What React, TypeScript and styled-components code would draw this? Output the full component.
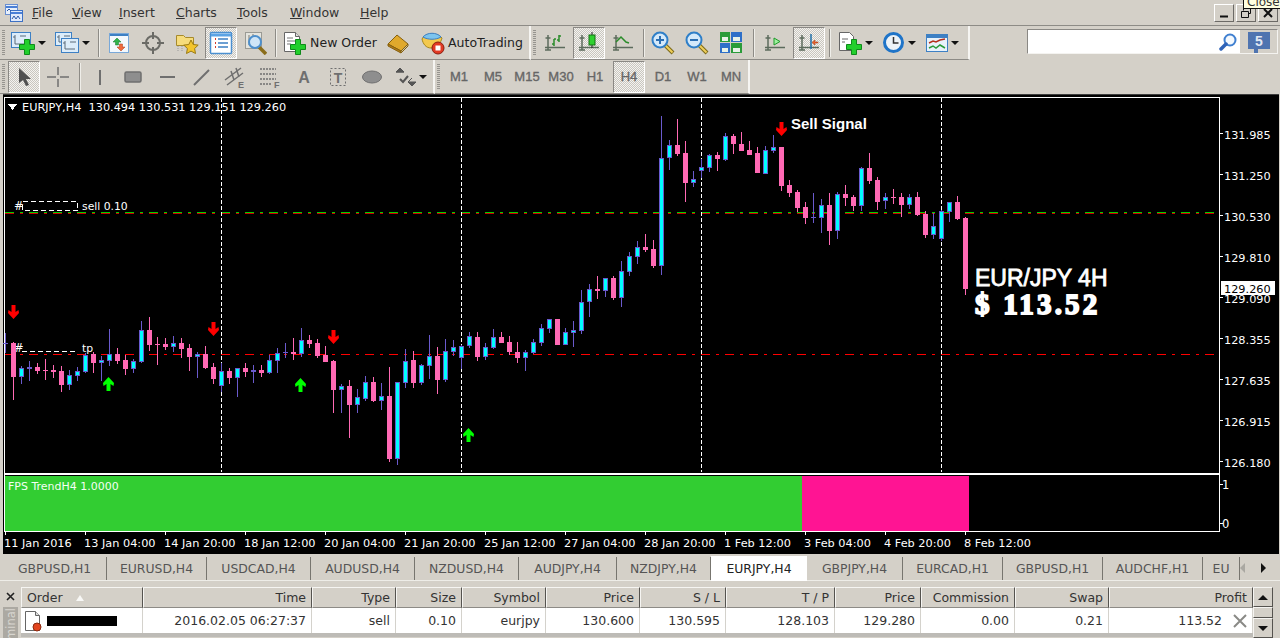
import React from 'react'
import styled, { createGlobalStyle } from 'styled-components'

const FONT = '"DejaVu Sans", "Liberation Sans", sans-serif'
const FACE = '#d4d0c8'

const GlobalStyle = createGlobalStyle`
  html, body { margin: 0; padding: 0; height: 100%; overflow: hidden; background: ${FACE}; }
  #root { height: 100%; }
`

// top, body top, body bottom, low (pixels on the chart). index -> x = 5 + 8 * i
type Candle = [1 | 0, number, number, number, number]
const candles: Candle[] = [
  [1,333,343,344,353],[0,342,343,377,400],[1,366,368,377,384],[1,361,367,369,381],[0,363,367,371,374],[0,359,370,371,380],
  [0,365,370,372,378],[0,366,371,385,392],[1,370,375,385,390],[1,367,371,376,381],[1,353,355,372,373],[0,352,354,363,373],
  [1,356,360,363,381],[1,329,354,361,366],[0,348,354,361,364],[0,355,360,369,375],[1,359,361,369,373],[1,321,330,362,363],
  [0,317,330,345,351],[0,337,344,345,365],[0,338,344,347,350],[1,336,343,347,352],[0,338,343,349,358],[0,344,348,357,371],
  [1,352,354,357,378],[0,346,354,368,369],[0,363,367,379,384],[1,363,371,386,392],[0,368,371,378,384],[1,368,368,378,397],
  [0,363,368,372,377],[1,365,370,372,383],[0,365,370,373,377],[1,355,360,373,374],[1,348,353,361,373],[1,343,352,353,358],
  [0,338,352,354,360],[1,328,340,354,357],[0,335,340,344,348],[0,339,343,356,358],[0,346,355,362,362],[0,360,361,390,413],
  [1,384,386,390,413],[0,380,386,405,438],[1,389,397,405,413],[1,376,382,399,401],[0,377,382,401,402],[1,383,396,401,410],
  [0,367,396,459,462],[1,382,382,459,465],[1,349,361,383,388],[0,351,360,383,388],[1,364,365,383,385],[1,335,356,366,379],
  [0,347,356,380,394],[1,339,351,380,382],[1,340,347,352,356],[1,345,346,358,369],[1,332,336,346,348],[0,332,337,357,361],
  [1,343,347,357,360],[1,329,337,348,349],[0,332,337,343,343],[0,336,342,352,355],[0,342,352,358,363],[1,350,352,358,371],
  [1,339,342,353,354],[1,324,328,343,346],[1,319,319,329,333],[0,319,319,345,345],[1,328,332,345,345],[1,321,330,333,347],
  [1,290,302,331,334],[1,284,289,302,317],[0,276,289,291,299],[1,278,278,291,297],[0,276,278,298,300],[1,261,271,298,307],
  [1,252,256,272,276],[1,241,247,257,264],[0,234,247,250,252],[0,240,249,266,268],[1,116,158,266,275],[1,140,145,158,170],
  [0,119,145,154,156],[0,141,153,183,202],[1,171,179,183,187],[1,159,167,171,178],[1,154,155,168,172],[0,152,155,159,171],
  [1,133,136,160,161],[0,134,136,144,154],[0,132,144,151,151],[0,141,150,155,155],[0,147,153,173,173],[1,146,150,174,174],
  [1,135,147,151,153],[0,147,147,186,191],[0,180,185,193,197],[0,190,192,208,212],[0,202,207,218,224],[1,193,217,218,223],
  [1,199,205,218,233],[0,193,205,231,245],[1,192,194,231,239],[0,185,194,198,206],[0,195,197,206,211],[1,167,168,206,211],
  [0,153,168,181,184],[0,177,180,202,210],[1,193,197,201,209],[0,189,197,198,204],[0,193,197,205,217],[1,194,197,205,209],
  [0,192,197,215,216],[0,211,214,235,238],[1,213,226,235,239],[1,210,211,239,241],[1,202,202,212,222],[0,196,202,219,220],
  [0,217,218,289,295],
]

const priceLabels: [string, number][] = [
  ['131.985', 134], ['131.250', 175], ['130.530', 216], ['129.810', 257], ['129.090', 298],
  ['128.355', 339], ['127.635', 380], ['126.915', 421], ['126.180', 462],
]
const timeLabels = [
  '11 Jan 2016', '13 Jan 04:00', '14 Jan 20:00', '18 Jan 12:00', '20 Jan 04:00', '21 Jan 20:00', '25 Jan 12:00',
  '27 Jan 04:00', '28 Jan 20:00', '1 Feb 12:00', '3 Feb 04:00', '4 Feb 20:00', '8 Feb 12:00',
]
const tabs: [string, number, boolean?][] = [
  ['GBPUSD,H1', 104], ['EURUSD,H4', 100], ['USDCAD,H4', 104], ['AUDUSD,H4', 104], ['NZDUSD,H4', 104], ['AUDJPY,H4', 98],
  ['NZDJPY,H4', 94], ['EURJPY,H4', 96, true], ['GBPJPY,H4', 96], ['EURCAD,H1', 100], ['GBPUSD,H1', 100], ['AUDCHF,H1', 100],
]
const COLS = '122px 169px 84px 66px 84px 94px 86px 109px 86px 94px 94px 144px'
const heads = ['Time', 'Type', 'Size', 'Symbol', 'Price', 'S / L', 'T / P', 'Price', 'Commission', 'Swap', 'Profit']
const cells = ['2016.02.05 06:27:37', 'sell', '0.10', 'eurjpy', '130.600', '130.595', '128.103', '129.280', '0.00', '0.21']

const Page = styled.div`
  width: 1280px;
  height: 638px;
  display: flex;
  flex-direction: column;
  position: relative;
  overflow: hidden;
  background: ${FACE};
  font-family: ${FONT};
  font-size: 12px;
  color: #222;
`
const MenuBar = styled.div`
  height: 25px;
  flex: none;
  display: flex;
  align-items: center;
  padding-left: 4px;
  border-bottom: 1px solid #8d8b86;
  position: relative;
`
const MenuItem = styled.span<{ $w: number }>`
  width: ${p => p.$w}px;
  font-size: 12.5px;
  color: #333;
  flex: none;
`
const WinButtons = styled.div`
  margin-left: auto;
  margin-right: 2px;
  display: flex;
  gap: 2px;
`
const WinButton = styled.div`
  width: 20px;
  height: 18px;
  box-sizing: border-box;
  border: 1px solid;
  border-color: #fff #6c6a66 #6c6a66 #fff;
  display: flex;
  align-items: center;
  justify-content: center;
`
const Tip = styled.div`
  position: absolute;
  top: -5px;
  right: -3px;
  width: 40px;
  height: 14px;
  box-sizing: border-box;
  background: #ffffe1;
  border: 1px solid #111;
  font-size: 12px;
  line-height: 13px;
  padding-left: 3px;
  color: #333;
`
const ToolRow = styled.div`
  height: 34px;
  flex: none;
  display: flex;
  align-items: stretch;
`
const Group = styled.div<{ $w: number; $edge?: boolean }>`
  width: ${p => p.$w}px;
  box-sizing: border-box;
  flex: none;
  display: flex;
  align-items: center;
  border-bottom: 1px solid #8d8b86;
  border-right: ${p => (p.$edge ? '2px solid #f6f5f2' : '0')};
`
const Grip = styled.span<{ $ml: number; $mr: number }>`
  width: 3px;
  height: 26px;
  flex: none;
  margin: 0 ${p => p.$mr}px 0 ${p => p.$ml}px;
  background: repeating-linear-gradient(#96948f 0 1px, transparent 1px 2px);
`
const Sep = styled.span<{ $w: number }>`
  width: ${p => p.$w}px;
  flex: none;
  display: flex;
  justify-content: center;
  &::before {
    content: '';
    width: 1px;
    height: 28px;
    background: #8d8b86;
    box-shadow: 1px 0 #efeee9;
  }
`
const ToolBtn = styled.div<{ $w?: number; $on?: boolean; $gap?: number }>`
  width: ${p => p.$w ?? 34}px;
  height: 32px;
  box-sizing: border-box;
  flex: none;
  display: flex;
  align-items: center;
  justify-content: center;
  gap: ${p => p.$gap ?? 0}px;
  font-size: 12.5px;
  color: #222;
  ${p =>
    p.$on
      ? `border: 1px solid; border-color: #8a8884 #fff #fff #8a8884; margin: 0 1px; width: 32px;
         background: repeating-conic-gradient(#c9c6bf 0 25%, #f4f3f0 0 50%) 0 0 / 2px 2px;`
      : ''}
`
const Caret = styled.span`
  width: 0;
  height: 0;
  flex: none;
  border-left: 4px solid transparent;
  border-right: 4px solid transparent;
  border-top: 4px solid #111;
`
const Frame = styled.span`
  font-family: "Liberation Sans", sans-serif;
  font-size: 13px;
  color: #666;
  -webkit-text-stroke: 0.35px #666;
`
const Search = styled.div`
  margin: 3px 2px 0 auto;
  width: 251px;
  height: 25px;
  box-sizing: border-box;
  flex: none;
  display: flex;
  border: 1px solid;
  border-color: #8a8884 #f4f3f0 #f4f3f0 #8a8884;
`
const SearchField = styled.div`
  flex: 1;
  background: #fff;
  display: flex;
  align-items: center;
  justify-content: flex-end;
  padding-right: 3px;
`
const SearchBadge = styled.div`
  width: 37px;
  flex: none;
  display: flex;
  align-items: center;
  justify-content: center;
`
const ChartWindow = styled.div`
  height: 460px;
  flex: none;
  margin-left: 3px;
  margin-right: 1px;
  background: #000;
  border-top: 1px solid #3c3c3c;
  box-sizing: border-box;
`
const ChartSvg = styled.svg`
  display: block;
  font-family: ${FONT};
`
const Label = styled.text<{ $c?: string; $s?: number }>`
  fill: ${p => p.$c ?? '#fff'};
  font-size: ${p => p.$s ?? 11.5}px;
  white-space: pre;
`
const SignalLabel = styled.text`
  fill: #fff;
  font-family: "Liberation Sans", sans-serif;
  font-size: 15px;
  font-weight: bold;
`
const PairLabel = styled.text`
  fill: #fff;
  font-family: "Liberation Sans", sans-serif;
  font-size: 23px;
  stroke: #fff;
  stroke-width: 0.8px;
`
const ProfitLabel = styled.text`
  fill: #fff;
  font-family: "Liberation Serif", serif;
  font-size: 29px;
  font-weight: bold;
  stroke: #fff;
  stroke-width: 1.8px;
  letter-spacing: 3.2px;
`
const TabBar = styled.div`
  height: 27px;
  flex: none;
  display: flex;
  align-items: center;
  box-sizing: border-box;
  padding: 2px 0 0 3px;
  border-bottom: 1px solid #eeede8;
`
const Tab = styled.div<{ $w: number; $on?: boolean }>`
  width: ${p => p.$w}px;
  height: 23px;
  box-sizing: border-box;
  flex: none;
  display: flex;
  align-items: center;
  justify-content: center;
  color: #555;
  font-size: 12.4px;
  border-right: ${p => (p.$on ? '0' : '1px solid #77756f')};
  ${p => (p.$on ? 'background: #fff; color: #222; height: 25px;' : '')}
`
const TabArrow = styled.span<{ $off?: boolean; $ml: number }>`
  width: 0;
  height: 0;
  flex: none;
  margin-left: ${p => p.$ml}px;
  border-top: 5px solid transparent;
  border-bottom: 5px solid transparent;
  ${p => (p.$off ? 'border-right: 5px solid #aaa8a2;' : 'border-left: 5px solid #111;')}
`
const Terminal = styled.div`
  flex: 1;
  display: flex;
  padding-top: 6px;
  min-height: 0;
`
const SideStrip = styled.div`
  width: 21px;
  flex: none;
  display: flex;
  flex-direction: column;
  align-items: flex-start;
  padding-left: 3px;
  box-sizing: border-box;
`
const CloseMark = styled.div`
  height: 18px;
  width: 15px;
  flex: none;
  display: flex;
  align-items: center;
  justify-content: center;
`
const VerticalTab = styled.div`
  width: 15px;
  flex: 1;
  margin-top: 2px;
  background: #aca9a2;
  overflow: hidden;
  color: #d8d6d0;
  font-size: 11.5px;
  display: flex;
  justify-content: center;
  align-items: flex-start;
`
const VerticalText = styled.span`
  writing-mode: vertical-rl;
  transform: rotate(180deg);
  flex: none;
  padding-bottom: 1px;
`
const Table = styled.div`
  width: 1232px;
  flex: none;
`
const HeadRow = styled.div`
  display: grid;
  grid-template-columns: ${COLS};
  height: 21px;
`
const HeadCell = styled.div<{ $left?: boolean }>`
  box-sizing: border-box;
  border: 1px solid;
  border-color: #f6f5f2 #55534f #8d8b86 #f6f5f2;
  display: flex;
  align-items: center;
  justify-content: ${p => (p.$left ? 'flex-start' : 'flex-end')};
  padding: 0 5px;
  font-size: 12.5px;
  color: #333;
  gap: 13px;
  white-space: nowrap;
`
const SortMark = styled.span`
  width: 0;
  height: 0;
  border-left: 4px solid transparent;
  border-right: 4px solid transparent;
  border-bottom: 6px solid #f8f8f6;
`
const BodyRow = styled.div`
  display: grid;
  grid-template-columns: ${COLS};
  height: 25px;
  background: #fff;
  border-bottom: 4px solid #bdbbb6;
`
const BodyCell = styled.div<{ $pad?: number }>`
  box-sizing: border-box;
  border-right: 1px solid #d4d2cc;
  display: flex;
  align-items: center;
  justify-content: flex-end;
  padding-right: ${p => p.$pad ?? 5}px;
  font-size: 12.5px;
  color: #333;
  gap: 10px;
`
const OrderCell = styled(BodyCell)`
  justify-content: flex-start;
  padding: 0 0 0 3px;
  gap: 4px;
`
const Redacted = styled.span`
  width: 70px;
  height: 10px;
  background: #000;
  flex: none;
`
const ScrollBar = styled.div`
  width: 20px;
  flex: none;
  display: flex;
  flex-direction: column;
`
const ScrollBtn = styled.div<{ $h: number }>`
  height: ${p => p.$h}px;
  flex: none;
  box-sizing: border-box;
  border: 1px solid;
  border-color: #f6f5f2 #55534f #55534f #f6f5f2;
  display: flex;
  align-items: center;
  justify-content: center;
`
const ScrollArrow = styled.span<{ $up?: boolean }>`
  width: 0;
  height: 0;
  border-left: 5px solid transparent;
  border-right: 5px solid transparent;
  ${p => (p.$up ? 'border-bottom: 5px solid #111;' : 'border-top: 5px solid #111;')}
`
const IconSvg = styled.svg`
  display: block;
  flex: none;
`

const Ico: React.FC<{ w?: number; h?: number; children: React.ReactNode }> = ({ w = 24, h = 24, children }) => (
  <IconSvg width={w} height={h} viewBox={`0 0 ${w} ${h}`}>
    {children}
  </IconSvg>
)

const G = '#6f6f6f'
const Plus = ({ dx = 0, dy = 0 }: { dx?: number; dy?: number }) => (
  <path transform={`translate(${dx} ${dy})`} d="M5.5 .5h5v5h5v5h-5v5h-5v-5h-5v-5h5z" fill="#22cf2c" stroke="#0f8a1b" />
)
const MiniWin = ({ x, y, w = 19, h = 15 }: { x: number; y: number; w?: number; h?: number }) => (
  <g>
    <rect x={x + 0.5} y={y + 0.5} width={w} height={h} fill="#dcecf9" stroke="#3d80c4" />
    <path d={`M${x + 4} ${y + 3}v${h - 6}h${w - 7}M${x + 4} ${y + 5}h-2M${x + 9} ${y + 4}h6`} stroke="#5b6b78" fill="none" />
  </g>
)
const Axes = ({ c = '#5c6b5c' }: { c?: string }) => (
  <path d="M5 4v15M2 16.500h20M2.500 7h5M8 19h-6" stroke={c} strokeWidth="1.500" fill="none" />
)
const Loupe = ({ sign }: { sign: 'plus' | 'minus' }) => (
  <>
    <path d="M14 14l8 8" stroke="#7c6a1a" strokeWidth="4" />
    <path d="M14.500 14.500l7 7" stroke="#f0cf5a" strokeWidth="2" />
    <circle cx="9" cy="9" r="7.500" fill="#d4e9fa" stroke="#2f7fc8" strokeWidth="2" />
    <path d={sign === 'plus' ? 'M5 9h8M9 5v8' : 'M5 9h8'} stroke="#2c6fb3" strokeWidth="2" />
  </>
)

const IconApp = () => (
  <Ico w={20} h={20}>
    <rect x="1.500" y="1.500" width="12" height="10" fill="#e8f0fb" stroke="#6a8fd0" />
    <rect x="6.500" y="7.500" width="12" height="11" fill="#dfe9fa" stroke="#3d71c4" />
    <path d="M2 4h11M7 10h11" stroke="#4a7fd6" strokeWidth="2" />
    <path d="M8 16l2-3 2 3 2-3 2 3M3 8l2-2 2 2" stroke="#2b58a8" fill="none" />
  </Ico>
)
const IconNewChart = () => (
  <Ico>
    <MiniWin x={0} y={1} />
    <Plus dx={8} dy={8} />
  </Ico>
)
const IconProfiles = () => (
  <Ico>
    <MiniWin x={0} y={1} w={16} h={13} />
    <MiniWin x={6} y={7} w={17} h={14} />
  </Ico>
)
const IconMarket = () => (
  <Ico>
    <rect x="2.500" y="2.500" width="19" height="19" fill="#f3f8fd" stroke="#79a8d8" />
    <path d="M3 4h18" stroke="#3d80c4" strokeWidth="2" />
    <path d="M10 7l-4 4h2.500v3h3v-3H14z" fill="#2fb34a" stroke="#16752a" strokeWidth=".5" />
    <path d="M14 20l4-4h-2.500v-3h-3v3H10z" fill="#ef6a3d" stroke="#a83a16" strokeWidth=".5" />
  </Ico>
)
const IconNavigator = () => (
  <Ico>
    <circle cx="12" cy="12" r="7" fill="none" stroke="#6b6b66" strokeWidth="2" />
    <path d="M12 1v7M12 16v7M1 12h7M16 12h7" stroke="#6b6b66" strokeWidth="2" />
  </Ico>
)
const IconFavorites = () => (
  <Ico>
    <path d="M1.500 4.500h7l2 2h8v8h-17z" fill="#f6dc7c" stroke="#a68a2c" />
    <path d="M3 15v6M7 15v6" stroke="#999" strokeDasharray="1 1" />
    <path d="M16 9l2.200 4.500 5 .6-3.600 3.400.9 5-4.500-2.400-4.500 2.400.9-5-3.600-3.400 5-.6z" fill="#f3c52e" stroke="#9a7a14" />
  </Ico>
)
const IconTerminal = () => (
  <Ico>
    <rect x="1.500" y="1.500" width="21" height="21" rx="1" fill="#fff" stroke="#4a8fd0" strokeWidth="1.500" />
    <path d="M2 4h20" stroke="#5ba3e4" strokeWidth="3" />
    <path d="M6 8h1M6 12h1M6 16h1" stroke="#d43a2a" strokeWidth="2" />
    <path d="M9 8h10M9 12h10M9 16h10" stroke="#3d80c4" strokeWidth="1.500" />
  </Ico>
)
const IconTester = () => (
  <Ico>
    <rect x="2.500" y="1.500" width="16" height="16" fill="#e4e4de" stroke="#9a9a94" />
    <path d="M6 4v10M10 3v8" stroke="#7a7a74" />
    <path d="M16 16l7 7" stroke="#8a6d1a" strokeWidth="3.500" />
    <circle cx="12" cy="11" r="6" fill="#cfe5f7" stroke="#4d8fcc" strokeWidth="2" />
  </Ico>
)
const IconOrder = () => (
  <Ico>
    <path d="M2.500 1.500h11l4 4v15h-15z" fill="#fff" stroke="#666" />
    <path d="M13.500 1.500v4h4" fill="#ddd" stroke="#666" />
    <path d="M5 7h6M5 10h8M5 13h4" stroke="#777" />
    <Plus dx={8} dy={8} />
  </Ico>
)
const IconBook = () => (
  <Ico>
    <path d="M2 13l9-9 11 9-7 7z" fill="#e0a92c" stroke="#86600f" />
    <path d="M2 13l13 7v2L2 15z" fill="#b57f18" stroke="#86600f" />
    <path d="M15 20l7-7v2l-7 7z" fill="#c9c4a6" stroke="#86600f" />
  </Ico>
)
const IconAuto = () => (
  <Ico>
    <path d="M1 8c2-6 16-7 20-1-1 5-6 10-11 10S2 13 1 8z" fill="#f3c94e" stroke="#a5861c" />
    <path d="M2 6c4-5 14-5 18 0-5 3-13 3-18 0z" fill="#7cc4ee" stroke="#3d80c4" />
    <circle cx="17" cy="17" r="6" fill="#e23a24" stroke="#8a1e10" />
    <rect x="14.500" y="14.500" width="5" height="5" fill="#fff" />
  </Ico>
)
const IconBars = () => (
  <Ico>
    <Axes />
    <path d="M11 15V8M11 13H9M11 8h2M16 11V4M16 9h-2M16 5h2" stroke="#2a8c2a" strokeWidth="1.500" fill="none" />
  </Ico>
)
const IconCandles = () => (
  <Ico>
    <Axes />
    <path d="M15 1v16" stroke="#222" />
    <rect x="12" y="4" width="6" height="10" fill="#2fd12f" stroke="#126e12" />
  </Ico>
)
const IconLine = () => (
  <Ico>
    <Axes />
    <path d="M5 11l5-5 5 5 3 1" stroke="#2a8c2a" strokeWidth="1.500" fill="none" />
  </Ico>
)
const IconZoomIn = () => <Ico><Loupe sign="plus" /></Ico>
const IconZoomOut = () => <Ico><Loupe sign="minus" /></Ico>
const IconTile = () => (
  <Ico>
    <rect x="1" y="1" width="10" height="10" fill="#2a9c3a" />
    <rect x="12" y="1" width="11" height="10" fill="#2e6fc8" />
    <rect x="1" y="12" width="10" height="10" fill="#2e6fc8" />
    <rect x="12" y="12" width="11" height="10" fill="#2a9c3a" />
    <path d="M3 6h6v4H3zM14 6h7v4h-7zM3 17h6v4H3zM14 17h7v4h-7z" fill="#e8f2e8" />
  </Ico>
)
const IconAutoScroll = () => (
  <Ico>
    <Axes />
    <path d="M11 7v7l6-3.500z" fill="#9ef09e" stroke="#1f9a2a" />
  </Ico>
)
const IconShift = () => (
  <Ico>
    <Axes />
    <path d="M14 3v15" stroke="#1f6fa8" strokeWidth="1.500" />
    <path d="M21 11h-3v-2l-3 2.500 3 2.500v-2h3z" fill="#e8602c" stroke="#a83a16" strokeWidth=".5" />
  </Ico>
)
const IconIndicators = () => (
  <Ico>
    <path d="M1.500 1.500h10l4 4v14h-14z" fill="#fff" stroke="#666" />
    <path d="M4 8h6M4 11h3" stroke="#666" />
    <Plus dx={8} dy={8} />
  </Ico>
)
const IconClock = () => (
  <Ico w={21} h={21}>
    <circle cx="10.500" cy="10.500" r="9" fill="#eef3f7" stroke="#1f74c8" strokeWidth="3" />
    <path d="M10.500 5v6h5" stroke="#333" strokeWidth="1.500" fill="none" />
  </Ico>
)
const IconTemplates = () => (
  <Ico w={22} h={22}>
    <rect x=".5" y="2.500" width="21" height="17" fill="#e8f2fb" stroke="#3d80c4" />
    <path d="M1 4.500h20" stroke="#3d80c4" strokeWidth="3" />
    <path d="M3 11l4-2 3 1 4-2 5-1" stroke="#b4301c" strokeWidth="1.500" fill="none" />
    <path d="M3 16l4-2 3 2 4-3 5 3" stroke="#2a9c3a" strokeWidth="1.500" fill="none" />
  </Ico>
)
const IconSearch = () => (
  <Ico w={18} h={18}>
    <circle cx="11" cy="7" r="5.500" fill="#f4f9fe" stroke="#3f7fd0" strokeWidth="2" />
    <path d="M7 11l-5 5" stroke="#2f63b8" strokeWidth="3.500" strokeLinecap="round" />
  </Ico>
)
const IconBubble = () => (
  <Ico w={22} h={24}>
    <rect y="2" width="22" height="17" fill="#4f74b0" />
    <path d="M6 19h4v4H6z" fill="#4f74b0" />
    <text x="11" y="16" textAnchor="middle" fontFamily="Liberation Sans, sans-serif" fontWeight="bold" fontSize="14" fill="#e2e8f2">5</text>
  </Ico>
)
const IconPointer = () => (
  <Ico>
    <path d="M7 3v15l4-3 3 6 3-1-3-6h5z" fill="#505050" />
  </Ico>
)
const IconCross = () => (
  <Ico>
    <path d="M12 2v8M12 14v8M1 12h9M14 12h9" stroke={G} strokeWidth="1.500" />
  </Ico>
)
const IconVLine = () => <Ico><path d="M12 5v15" stroke={G} strokeWidth="2" /></Ico>
const IconRect = () => <Ico><rect x="3" y="7" width="16" height="10" rx="1.500" fill="#8e8e8e" stroke={G} strokeWidth="1.500" /></Ico>
const IconHLine = () => <Ico><path d="M4 12h15" stroke={G} strokeWidth="2" /></Ico>
const IconTrend = () => <Ico><path d="M4 20L19 5" stroke={G} strokeWidth="2" /></Ico>
const IconChannel = () => (
  <Ico>
    <path d="M1 15L17 3M3 20L19 8M7 6l3 9M12 3l3 9" stroke={G} strokeWidth="1.500" />
    <text x="14" y="23" fontFamily="Liberation Sans, sans-serif" fontWeight="bold" fontSize="9" fill={G}>E</text>
  </Ico>
)
const IconFib = () => (
  <Ico>
    <path d="M2 4h16M2 9h16M2 14h16M2 19h12" stroke={G} strokeWidth="1.500" strokeDasharray="2 1" />
    <text x="16" y="23" fontFamily="Liberation Sans, sans-serif" fontWeight="bold" fontSize="9" fill={G}>F</text>
  </Ico>
)
const IconText = () => (
  <Ico>
    <text x="12" y="18" textAnchor="middle" fontFamily="Liberation Sans, sans-serif" fontWeight="bold" fontSize="16" fill={G}>A</text>
  </Ico>
)
const IconTextLabel = () => (
  <Ico>
    <rect x="4.500" y="3.500" width="15" height="17" fill="none" stroke={G} strokeDasharray="2 2" />
    <text x="12" y="18" textAnchor="middle" fontFamily="Liberation Sans, sans-serif" fontWeight="bold" fontSize="14" fill={G}>T</text>
  </Ico>
)
const IconEllipse = () => <Ico><ellipse cx="12" cy="12" rx="9.500" ry="6" fill="#8e8e8e" stroke={G} /></Ico>
const IconArrows = () => (
  <Ico>
    <path d="M2 7l4-4 4 4zM14 17l4 4 4-4zM2 7h8M14 17l4-4" fill="#555" stroke="#555" />
    <path d="M6 14l3 3 5-6" stroke="#555" strokeWidth="2" fill="none" />
  </Ico>
)
const IconDocAlert = () => (
  <Ico w={19} h={22}>
    <path d="M1.500 1.500h10l4 4v15h-14z" fill="#fff" stroke="#666" />
    <path d="M11.500 1.500v4h4" fill="#ddd" stroke="#666" />
    <circle cx="13" cy="17" r="4" fill="#e2451f" stroke="#8a2a10" />
  </Ico>
)

const SignalArrow: React.FC<{ x: number; y: number; up?: boolean }> = ({ x, y, up }) => (
  <polygon
    transform={`translate(${x} ${y}) scale(1 ${up ? -1 : 1})`}
    fill={up ? '#00ff00' : '#ff0000'}
    points="-2,-7 2,-7 2,0 5,-2 5.500,1 0,7 -5.500,1 -5,-2 -2,0"
  />
)

const DASH = '9 6 3 6'

const Chart = () => (
  <ChartSvg width={1276} height={459} viewBox="3 95 1276 459" shapeRendering="crispEdges">
    <rect x="4" y="97" width="1215" height="376" fill="none" stroke="#fff" />
    <rect x="4" y="474.500" width="1215" height="57" fill="none" stroke="#fff" />

    <polygon points="8,104 17,104 12.500,110" fill="#fff" />
    <Label x="22" y="111" $s={11.3}>EURJPY,H4  130.494 130.531 129.151 129.260</Label>

    <path d="M5 212.500h1213" stroke="#00d000" strokeDasharray={DASH} />
    <path d="M5 213.500h1213" stroke="#d00000" strokeDasharray={DASH} />
    <path d="M5 354.500h1213" stroke="#ff0000" strokeWidth="1.200" strokeDasharray={DASH} />

    {[221.5, 461.5, 701.5, 941.5].map(x => (
      <path key={x} d={`M${x} 98v374`} stroke="#fff" strokeDasharray="4 2" />
    ))}

    <Label x="14" y="210">#</Label>
    <rect x="22.500" y="201.500" width="55" height="9" fill="none" stroke="#fff" strokeDasharray="5 3" />
    <Label x="82" y="210" $s={10.8}>sell 0.10</Label>
    <Label x="14" y="352">#</Label>
    <path d="M22 351.500h53" stroke="#fff" strokeDasharray="5 3" />
    <Label x="82" y="352" $s={10.8}>tp</Label>

    {candles.map(([bull, high, top, bottom, low], i) => {
      const x = 5 + 8 * i
      return (
        <g key={i}>
          <rect x={x} y={high} width="1" height={low - high} fill={bull ? '#6a5acd' : '#ff69b4'} />
          <rect x={x - 2} y={top} width="5" height={Math.max(bottom - top, 1)} fill={bull ? '#6a5acd' : '#ff69b4'} />
          {bull === 1 && bottom - top > 2 && (
            <rect x={x - 1} y={top + 1} width="3" height={bottom - top - 2} fill="#00ffff" />
          )}
        </g>
      )
    })}

    <g shapeRendering="auto">
      <SignalArrow x={13.500} y={312} />
      <SignalArrow x={213.500} y={329} />
      <SignalArrow x={333.500} y={337} />
      <SignalArrow x={781.500} y={129} />
      <SignalArrow x={108.500} y={384} up />
      <SignalArrow x={300.500} y={385} up />
      <SignalArrow x={468.500} y={435} up />
    </g>

    <SignalLabel x="791" y="129">Sell Signal</SignalLabel>
    <PairLabel x="975" y="286">EUR/JPY 4H</PairLabel>
    <ProfitLabel x="975" y="314">$ 113.52</ProfitLabel>

    {priceLabels.map(([t, y]) => (
      <g key={t}>
        <path d={`M1219 ${y - 0.500}h4`} stroke="#fff" />
        <Label x="1224" y={y + 4.500} $s={11.300}>{t}</Label>
      </g>
    ))}
    <rect x="1221" y="281" width="54" height="14" fill="#fff" />
    <Label x="1224" y="293" $c="#000" $s={11.300}>129.260</Label>

    <rect x="5" y="476" width="797" height="55" fill="#32cd32" />
    <rect x="802" y="476" width="167" height="55" fill="#ff1493" />
    <Label x="8" y="490" $c="#f4fff4" $s={11}>FPS TrendH4 1.0000</Label>
    <path d="M1219 484.500h4M1219 523.500h4" stroke="#fff" />
    <Label x="1222" y="489">1</Label>
    <Label x="1222" y="528">0</Label>

    {timeLabels.map((t, i) => (
      <g key={t}>
        <path d={`M${5.5 + 80 * i} 531v4`} stroke="#fff" />
        <Label x={4 + 80 * i} y="547" $s={11.300}>{t}</Label>
      </g>
    ))}
  </ChartSvg>
)

export default function App() {
  return (
    <Page>
      <GlobalStyle />
      <MenuBar>
        <MenuItem $w={28}><IconApp /></MenuItem>
        <MenuItem $w={40}><u>F</u>ile</MenuItem>
        <MenuItem $w={47}><u>V</u>iew</MenuItem>
        <MenuItem $w={57}><u>I</u>nsert</MenuItem>
        <MenuItem $w={61}><u>C</u>harts</MenuItem>
        <MenuItem $w={53}><u>T</u>ools</MenuItem>
        <MenuItem $w={70}><u>W</u>indow</MenuItem>
        <MenuItem $w={40}><u>H</u>elp</MenuItem>
        <WinButtons>
          <WinButton>
            <Ico w={10} h={10}><path d="M1 8.500h8" stroke="#111" strokeWidth="2" /></Ico>
          </WinButton>
          <WinButton>
            <Ico w={12} h={12}><path d="M3.500 3.500v-2h7v5h-2M1.500 4.500h7v6h-7z" stroke="#111" fill="none" /></Ico>
          </WinButton>
          <WinButton>
            <Ico w={10} h={10}><path d="M1 1l8 8M9 1l-8 8" stroke="#111" strokeWidth="2" /></Ico>
          </WinButton>
        </WinButtons>
        <Tip>Close</Tip>
      </MenuBar>

      <ToolRow>
        <Group $w={531} $edge>
          <Grip $ml={2} $mr={1} />
          <ToolBtn $w={44} $gap={3}><IconNewChart /><Caret /></ToolBtn>
          <ToolBtn $w={44} $gap={3}><IconProfiles /><Caret /></ToolBtn>
          <Sep $w={8} />
          <ToolBtn><IconMarket /></ToolBtn>
          <ToolBtn><IconNavigator /></ToolBtn>
          <ToolBtn><IconFavorites /></ToolBtn>
          <ToolBtn $on><IconTerminal /></ToolBtn>
          <ToolBtn><IconTester /></ToolBtn>
          <Sep $w={6} />
          <ToolBtn $w={103} $gap={4}><IconOrder />New Order</ToolBtn>
          <ToolBtn><IconBook /></ToolBtn>
          <ToolBtn $w={114} $gap={3}><IconAuto />AutoTrading</ToolBtn>
        </Group>
        <Group $w={439} $edge>
          <Grip $ml={2} $mr={2} />
          <ToolBtn><IconBars /></ToolBtn>
          <ToolBtn $on><IconCandles /></ToolBtn>
          <ToolBtn><IconLine /></ToolBtn>
          <Sep $w={6} />
          <ToolBtn><IconZoomIn /></ToolBtn>
          <ToolBtn><IconZoomOut /></ToolBtn>
          <ToolBtn><IconTile /></ToolBtn>
          <Sep $w={10} />
          <ToolBtn><IconAutoScroll /></ToolBtn>
          <ToolBtn $on><IconShift /></ToolBtn>
          <Sep $w={6} />
          <ToolBtn $w={46} $gap={3}><IconIndicators /><Caret /></ToolBtn>
          <ToolBtn $w={42} $gap={4}><IconClock /><Caret /></ToolBtn>
          <ToolBtn $w={44} $gap={3}><IconTemplates /><Caret /></ToolBtn>
        </Group>
        <Search>
          <SearchField><IconSearch /></SearchField>
          <SearchBadge><IconBubble /></SearchBadge>
        </Search>
      </ToolRow>

      <ToolRow>
        <Group $w={435} $edge>
          <Grip $ml={2} $mr={2} />
          <ToolBtn $on><IconPointer /></ToolBtn>
          <ToolBtn><IconCross /></ToolBtn>
          <Sep $w={8} />
          <ToolBtn><IconVLine /></ToolBtn>
          <ToolBtn><IconRect /></ToolBtn>
          <ToolBtn><IconHLine /></ToolBtn>
          <ToolBtn><IconTrend /></ToolBtn>
          <ToolBtn><IconChannel /></ToolBtn>
          <ToolBtn><IconFib /></ToolBtn>
          <ToolBtn><IconText /></ToolBtn>
          <ToolBtn><IconTextLabel /></ToolBtn>
          <ToolBtn><IconEllipse /></ToolBtn>
          <ToolBtn $w={42} $gap={1}><IconArrows /><Caret /></ToolBtn>
        </Group>
        <Group $w={315} $edge>
          <Grip $ml={2} $mr={2} />
          {['M1', 'M5', 'M15', 'M30', 'H1', 'H4', 'D1', 'W1', 'MN'].map(t => (
            <ToolBtn key={t} $on={t === 'H4'}><Frame>{t}</Frame></ToolBtn>
          ))}
        </Group>
      </ToolRow>

      <ChartWindow>
        <Chart />
      </ChartWindow>

      <TabBar>
        {tabs.map(([t, w, on], i) => (
          <Tab key={i} $w={w} $on={on}>{t}</Tab>
        ))}
        <Tab $w={37}>EU</Tab>
        <TabArrow $off $ml={0} />
        <TabArrow $ml={16} />
      </TabBar>

      <Terminal>
        <SideStrip>
          <CloseMark>
            <Ico w={9} h={9}><path d="M1 1l7 7M8 1l-7 7" stroke="#222" strokeWidth="1.600" /></Ico>
          </CloseMark>
          <VerticalTab><VerticalText>Terminal</VerticalText></VerticalTab>
        </SideStrip>
        <Table>
          <HeadRow>
            <HeadCell $left>Order <SortMark /></HeadCell>
            {heads.map((h, i) => (
              <HeadCell key={i}>{h}</HeadCell>
            ))}
          </HeadRow>
          <BodyRow>
            <OrderCell><IconDocAlert /><Redacted /></OrderCell>
            {cells.map((c, i) => (
              <BodyCell key={i}>{c}</BodyCell>
            ))}
            <BodyCell $pad={4}>
              113.52
              <Ico w={16} h={16}><path d="M2 2l12 12M14 2L2 14" stroke="#8a8a86" strokeWidth="2" /></Ico>
            </BodyCell>
          </BodyRow>
        </Table>
        <ScrollBar>
          <ScrollBtn $h={20}><ScrollArrow $up /></ScrollBtn>
          <ScrollBtn $h={11} />
          <ScrollBtn $h={20}><ScrollArrow /></ScrollBtn>
        </ScrollBar>
      </Terminal>
    </Page>
  )
}
